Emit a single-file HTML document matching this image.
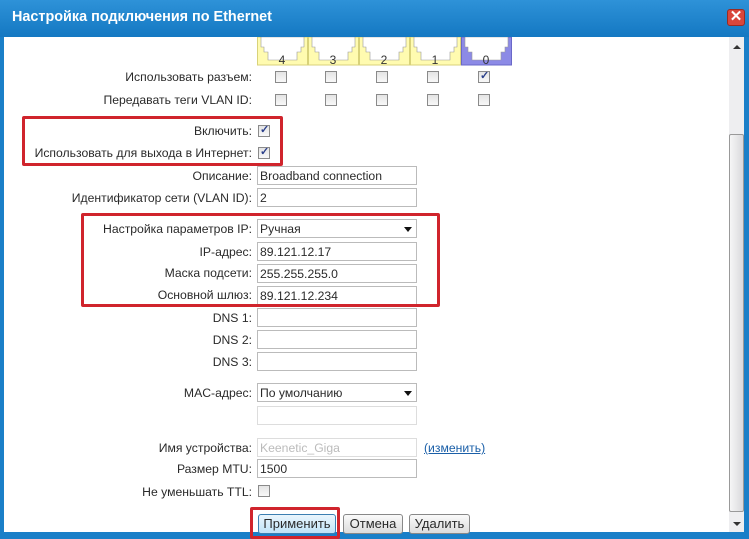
<!DOCTYPE html>
<html><head><meta charset="utf-8"><style>
*{box-sizing:border-box;margin:0;padding:0}
body{width:749px;height:536px;overflow:hidden;background:#1a7fc8;font-family:"Liberation Sans",Arial,sans-serif;font-size:12.2px;color:#2a2a2a;position:relative}
.title{position:absolute;left:0;top:0;width:749px;height:37px;background:linear-gradient(#2e92d8,#1478c2);}
.title span{position:absolute;left:12px;top:9px;color:#fff;font-weight:bold;font-size:14.4px}
.close{position:absolute;left:727px;top:9px;width:18px;height:17px;background:#d9473c;border:1px solid #9a2a22;border-radius:3px;color:#fff;font-size:15px;line-height:14px;text-align:center;font-weight:bold}
.content{position:absolute;left:4px;top:37px;width:740px;height:495px;background:#fff;overflow:hidden}
.sb{position:absolute;left:729px;top:37px;width:15px;height:495px;background:#eeeef0}
.thumb{position:absolute;left:729px;top:134px;width:15px;height:378px;background:linear-gradient(90deg,#f6f6f6,#d9d9dc);border:1px solid #999;border-radius:2px}
.lbl{position:absolute;right:497px;text-align:right;white-space:nowrap}
.inp{position:absolute;left:257px;width:160px;height:19px;border:1px solid #bbb;background:#fff;padding-left:2px;line-height:19px;white-space:nowrap}
.cb{position:absolute;width:12px;height:12px;border:1px solid #8a8a8a;background:linear-gradient(#e4e4e4,#f8f8f8)}
.cb.c::after{content:"✓";position:absolute;left:1px;top:-3px;font-size:11px;color:#2a3f8a;font-weight:bold}
.red{position:absolute;border:3px solid #d0242c;border-radius:2px}
.btn{position:absolute;top:514px;height:20px;border:1px solid #888;border-radius:3px;background:linear-gradient(#fafafa,#dcdcdc);line-height:18px;text-align:center;font-size:13px}
.arr{position:absolute;left:404px;width:0;height:0;border-left:4px solid transparent;border-right:4px solid transparent;border-top:5px solid #111}
</style></head><body>
<div class="title"><span>Настройка подключения по Ethernet</span><div class="close">✕</div></div>
<div class="content"></div>
<svg style="position:absolute;left:0;top:37px" width="749" height="30">
<g fill="#fffbb0" stroke="#d8d27a">
<rect x="257.5" y="0" width="50" height="28"/><rect x="308.5" y="0" width="50" height="28"/><rect x="359.5" y="0" width="50" height="28"/><rect x="410.5" y="0" width="50" height="28"/></g>
<rect x="461.5" y="0" width="50" height="28" fill="#8c8ae6" stroke="#6a68c8"/>
<g fill="#fff" stroke="#999" stroke-width="0.6">
<polygon points="261,0 304,0 304,10 301,10 301,15 297,15 297,23 268,23 268,15 264,15 264,10 261,10"/>
<polygon points="312,0 355,0 355,10 352,10 352,15 348,15 348,23 319,23 319,15 315,15 315,10 312,10"/>
<polygon points="363,0 406,0 406,10 403,10 403,15 399,15 399,23 370,23 370,15 366,15 366,10 363,10"/>
<polygon points="414,0 457,0 457,10 454,10 454,15 450,15 450,23 421,23 421,15 417,15 417,10 414,10"/>
<polygon points="465,0 508,0 508,10 505,10 505,15 501,15 501,23 472,23 472,15 468,15 468,10 465,10"/></g>
<g font-family="Liberation Sans" font-size="12" fill="#333" text-anchor="middle">
<text x="282" y="27">4</text><text x="333" y="27">3</text><text x="384" y="27">2</text><text x="435" y="27">1</text><text x="486" y="27">0</text></g>
</svg>
<div class="lbl" style="top:70px">Использовать разъем:</div>
<div class="lbl" style="top:93px">Передавать теги VLAN ID:</div>
<div class="cb" style="left:275px;top:71px"></div><div class="cb" style="left:325px;top:71px"></div><div class="cb" style="left:376px;top:71px"></div><div class="cb" style="left:427px;top:71px"></div><div class="cb c" style="left:478px;top:71px"></div>
<div class="cb" style="left:275px;top:94px"></div><div class="cb" style="left:325px;top:94px"></div><div class="cb" style="left:376px;top:94px"></div><div class="cb" style="left:427px;top:94px"></div><div class="cb" style="left:478px;top:94px"></div>
<div class="lbl" style="top:124px">Включить:</div><div class="cb c" style="left:258px;top:125px"></div>
<div class="lbl" style="top:146px">Использовать для выхода в Интернет:</div><div class="cb c" style="left:258px;top:147px"></div>
<div class="lbl" style="top:169px">Описание:</div><div class="inp" style="top:166px">Broadband connection</div>
<div class="lbl" style="top:191px">Идентификатор сети (VLAN ID):</div><div class="inp" style="top:188px">2</div>
<div class="lbl" style="top:222px">Настройка параметров IP:</div><div class="inp" style="top:219px">Ручная</div><div class="arr" style="top:227px"></div>
<div class="lbl" style="top:245px">IP-адрес:</div><div class="inp" style="top:242px">89.121.12.17</div>
<div class="lbl" style="top:266px">Маска подсети:</div><div class="inp" style="top:264px">255.255.255.0</div>
<div class="lbl" style="top:288px">Основной шлюз:</div><div class="inp" style="top:286px">89.121.12.234</div>
<div class="lbl" style="top:311px">DNS 1:</div><div class="inp" style="top:308px"></div>
<div class="lbl" style="top:333px">DNS 2:</div><div class="inp" style="top:330px"></div>
<div class="lbl" style="top:355px">DNS 3:</div><div class="inp" style="top:352px"></div>
<div class="lbl" style="top:386px">MAC-адрес:</div><div class="inp" style="top:383px">По умолчанию</div><div class="arr" style="top:391px"></div>
<div class="inp" style="top:406px;border-color:#ddd"></div>
<div class="lbl" style="top:441px">Имя устройства:</div><div class="inp" style="top:438px;color:#bbb;border-color:#ddd">Keenetic_Giga</div>
<div style="position:absolute;left:424px;top:441px;color:#1a5fa8;text-decoration:underline">(изменить)</div>
<div class="lbl" style="top:462px">Размер MTU:</div><div class="inp" style="top:459px">1500</div>
<div class="lbl" style="top:485px">Не уменьшать TTL:</div><div class="cb" style="left:258px;top:485px"></div>
<div class="btn" style="left:258px;width:78px;background:linear-gradient(#eaf6fd,#bfe3f7);border-color:#3c7fb1">Применить</div>
<div class="btn" style="left:343px;width:60px">Отмена</div>
<div class="btn" style="left:409px;width:61px">Удалить</div>
<div class="red" style="left:22px;top:116px;width:261px;height:50px"></div>
<div class="red" style="left:81px;top:213px;width:359px;height:94px"></div>
<div class="red" style="left:250px;top:507px;width:90px;height:32px"></div>
<div class="sb"></div><div class="thumb"></div>
<div style="position:absolute;left:733px;top:45px;border-left:4px solid transparent;border-right:4px solid transparent;border-bottom:4px solid #333"></div>
<div style="position:absolute;left:733px;top:522px;border-left:4px solid transparent;border-right:4px solid transparent;border-top:4px solid #333"></div>
</body></html>
